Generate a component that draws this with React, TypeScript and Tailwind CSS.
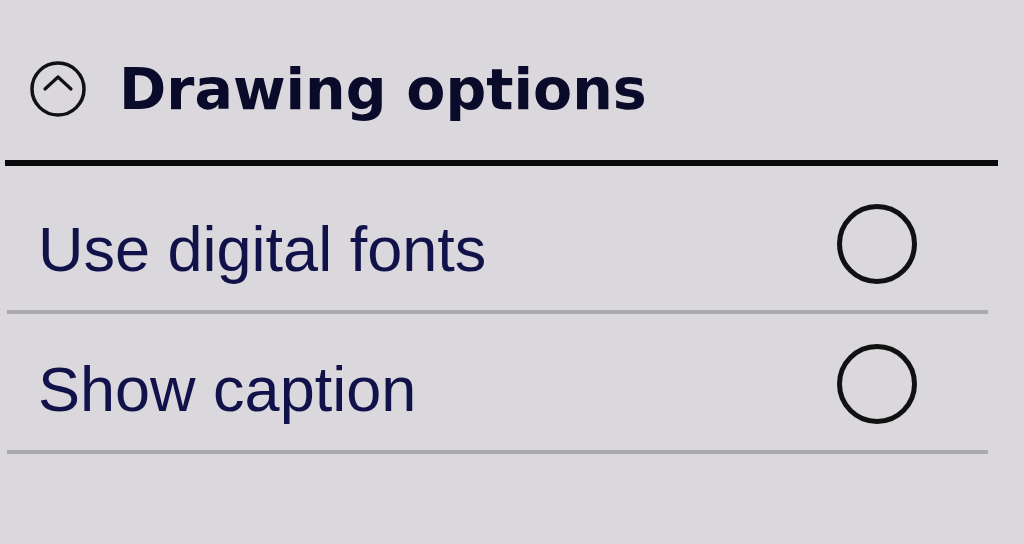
import React from 'react';

const options = [
  { label: 'Use digital fonts', rowClass: 'h-[148px] pt-[12px]' },
  { label: 'Show caption', rowClass: 'h-[140px] pt-[4px]' },
];

const CollapseIcon: React.FC = () => (
  <svg width="58" height="58" viewBox="0 0 58 58" fill="none" stroke="#111" strokeWidth={3.5}>
    <circle cx="29" cy="29" r="26" />
    <path d="M16 29 L29 17 L42 29" strokeLinecap="round" strokeLinejoin="round" strokeWidth={3.2} />
  </svg>
);

const RadioCircle: React.FC = () => (
  <div className="w-[80px] h-[80px] rounded-full border-[5px] border-[#111] flex-shrink-0" />
);

const App: React.FC = () => {
  return (
    <div className="w-[1024px] h-[544px] bg-[#dad8dc] overflow-hidden pl-[5px]">
      {/* Section header */}
      <div className="h-[160px] flex items-center pl-[24px] pt-[18px] gap-[32px]">
        <CollapseIcon />
        <span
          className="text-[57px] font-bold leading-none text-[#0a0a2a]"
          style={{ fontFamily: '"DejaVu Sans", "Liberation Sans", sans-serif' }}
        >
          Drawing options
        </span>
      </div>
      <div className="w-[993px] h-[6px] bg-[#0a0a0a]" />

      {/* Option rows */}
      <div className="ml-[2px] w-[981px]">
        {options.map((opt) => (
          <div
            key={opt.label}
            className={`flex items-center justify-between pl-[31px] pr-[71px] border-b-[4px] border-[#aaa9ac] ${opt.rowClass}`}
          >
            <span
              className="text-[63px] leading-none text-[#12124a] mt-[10px]"
              style={{ fontFamily: '"Liberation Sans", Arial, sans-serif' }}
            >
              {opt.label}
            </span>
            <RadioCircle />
          </div>
        ))}
      </div>
    </div>
  );
};

export default App;
